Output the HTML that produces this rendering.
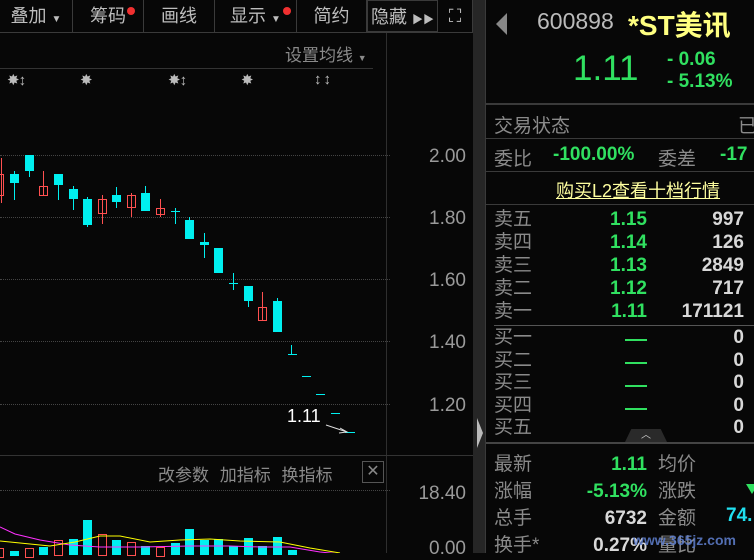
<!DOCTYPE html>
<html><head><meta charset="utf-8"><style>
*{margin:0;padding:0;box-sizing:border-box}
body{width:754px;height:553px;background:#070707;overflow:hidden;position:relative;font-family:"Liberation Sans","Noto Sans CJK SC",sans-serif;color:#9a9a9a}
.a{position:absolute}
.tb{position:absolute;top:0;height:32px;border-right:1px solid #3a3a3a;font-size:18px;color:#bdbdbd;text-align:center;line-height:32px}
.dot{position:absolute;width:8px;height:8px;border-radius:50%;background:#f03030}
.g{position:absolute;left:0;width:390px;height:0;border-top:1px dotted #444}
.c{position:absolute;background:#00f0f0}
.r{position:absolute;border:1px solid #ff5050}
.w{position:absolute;width:1px}
.cw{background:#00f0f0}.rw{background:#ff5050}
.ax{position:absolute;left:400px;width:66px;text-align:right;font-size:19px;color:#9a9a9a}
.lb{position:absolute;left:494px;font-size:19px;color:#8a8a8a}
.gn{color:#30e060;font-weight:bold}
.wh{color:#d8d8d8;font-weight:bold}
.hl{position:absolute;height:1px;background:#3a3a3a}
</style></head><body>
<div class="tb" style="left:0;width:73px">叠加 <span style="font-size:10px">▼</span></div>
<div class="tb" style="left:73px;width:71px">筹码</div><div class="dot" style="left:127px;top:7px"></div>
<div class="tb" style="left:144px;width:71px">画线</div>
<div class="tb" style="left:215px;width:82px">显示 <span style="font-size:10px">▼</span></div><div class="dot" style="left:283px;top:7px"></div>
<div class="tb" style="left:297px;width:70px">简约</div>
<div class="tb" style="left:367px;width:71px;border:1px solid #3a3a3a;background:#0a0a0a">隐藏 <span style="font-size:11px">▶▶</span></div>
<div class="tb" style="left:438px;width:35px;font-size:18px">⛶</div>
<div class="hl" style="left:0;top:32px;width:473px"></div>
<div class="a" style="left:386px;top:33px;width:1px;height:520px;background:#2e2e2e"></div>
<div class="a" style="left:473px;top:0;width:12px;height:553px;background:#262626"></div>
<div class="a" style="left:477px;top:418px;width:0;height:0;border-top:15px solid transparent;border-bottom:15px solid transparent;border-left:6px solid #bbb"></div>
<div class="a" style="left:285px;top:41px;font-size:17px;color:#8a8a8a">设置均线 <span style="font-size:9px">▼</span></div>
<div class="a" style="left:0;top:68px;width:373px;height:1px;background:#333"></div>
<div class="a" style="left:7px;top:71px;font-size:15px;color:#bbb;letter-spacing:-1px">✸↕</div>
<div class="a" style="left:80px;top:71px;font-size:15px;color:#bbb">✸</div>
<div class="a" style="left:168px;top:71px;font-size:15px;color:#bbb;letter-spacing:-1px">✸↕</div>
<div class="a" style="left:241px;top:71px;font-size:15px;color:#bbb">✸</div>
<div class="a" style="left:314px;top:71px;font-size:15px;color:#bbb;letter-spacing:2px">↕↕</div>
<div class="g" style="top:155px"></div><div class="g" style="top:217px"></div><div class="g" style="top:279px"></div><div class="g" style="top:341px"></div><div class="g" style="top:404px"></div>
<div class="ax" style="top:146px">2.00</div><div class="ax" style="top:208px">1.80</div><div class="ax" style="top:270px">1.60</div><div class="ax" style="top:332px">1.40</div><div class="ax" style="top:395px">1.20</div>
<div class="w rw" style="left:1px;top:158px;height:45px"></div><div class="r" style="left:-5px;top:174px;width:9px;height:22px"></div>
<div class="w cw" style="left:14px;top:171px;height:29px"></div><div class="c" style="left:10px;top:174px;width:9px;height:9px"></div>
<div class="w cw" style="left:29px;top:155px;height:22px"></div><div class="c" style="left:25px;top:155px;width:9px;height:16px"></div>
<div class="w rw" style="left:43px;top:171px;height:25px"></div><div class="r" style="left:39px;top:186px;width:9px;height:10px"></div>
<div class="w cw" style="left:58px;top:174px;height:26px"></div><div class="c" style="left:54px;top:174px;width:9px;height:11px"></div>
<div class="w cw" style="left:73px;top:186px;height:24px"></div><div class="c" style="left:69px;top:189px;width:9px;height:10px"></div>
<div class="w cw" style="left:87px;top:197px;height:30px"></div><div class="c" style="left:83px;top:199px;width:9px;height:26px"></div>
<div class="w rw" style="left:102px;top:195px;height:29px"></div><div class="r" style="left:98px;top:199px;width:9px;height:15px"></div>
<div class="w cw" style="left:116px;top:187px;height:21px"></div><div class="c" style="left:112px;top:195px;width:9px;height:7px"></div>
<div class="w rw" style="left:131px;top:193px;height:24px"></div><div class="r" style="left:127px;top:195px;width:9px;height:13px"></div>
<div class="w cw" style="left:145px;top:186px;height:25px"></div><div class="c" style="left:141px;top:193px;width:9px;height:18px"></div>
<div class="w rw" style="left:160px;top:199px;height:18px"></div><div class="r" style="left:156px;top:208px;width:9px;height:7px"></div>
<div class="w cw" style="left:175px;top:208px;height:16px"></div><div class="c" style="left:171px;top:211px;width:9px;height:1px"></div>
<div class="w cw" style="left:189px;top:217px;height:22px"></div><div class="c" style="left:185px;top:220px;width:9px;height:19px"></div>
<div class="w cw" style="left:204px;top:233px;height:25px"></div><div class="c" style="left:200px;top:242px;width:9px;height:3px"></div>
<div class="c" style="left:214px;top:248px;width:9px;height:25px"></div>
<div class="w cw" style="left:233px;top:273px;height:17px"></div><div class="c" style="left:229px;top:283px;width:9px;height:1px"></div>
<div class="w cw" style="left:248px;top:286px;height:21px"></div><div class="c" style="left:244px;top:286px;width:9px;height:15px"></div>
<div class="w rw" style="left:262px;top:292px;height:28px"></div><div class="r" style="left:258px;top:307px;width:9px;height:14px"></div>
<div class="w cw" style="left:277px;top:298px;height:34px"></div><div class="c" style="left:273px;top:301px;width:9px;height:31px"></div>
<div class="w cw" style="left:291px;top:345px;height:9px"></div><div class="c" style="left:288px;top:354px;width:9px;height:1px"></div>
<div class="c" style="left:302px;top:376px;width:9px;height:1px"></div>
<div class="c" style="left:316px;top:394px;width:9px;height:1px"></div>
<div class="c" style="left:331px;top:413px;width:9px;height:1px"></div>
<div class="c" style="left:345px;top:432px;width:10px;height:1px"></div>
<div class="a" style="left:287px;top:406px;font-size:18px;color:#fff">1.11</div>
<svg class="a" style="left:325px;top:420px" width="25" height="15"><path d="M1 5 L22 12 M15 8 L22 12 L14 13" stroke="#ddd" fill="none"/></svg>
<div class="a" style="left:0;top:455px;width:473px;height:1px;background:#333"></div>
<div class="a" style="left:158px;top:461px;font-size:17px;color:#8a8a8a;word-spacing:6px">改参数 加指标 换指标</div>
<div class="a" style="left:362px;top:461px;width:22px;height:22px;border:1px solid #555;color:#888;font-size:16px;text-align:center;line-height:20px">✕</div>
<div class="g" style="top:490px"></div>
<div class="ax" style="left:380px;top:483px;width:86px">18.40</div>
<div class="ax" style="top:538px">0.00</div>
<div class="r" style="left:-5px;top:548px;width:9px;height:10px"></div>
<div class="c" style="left:10px;top:551px;width:9px;height:5px"></div>
<div class="r" style="left:25px;top:548px;width:9px;height:10px"></div>
<div class="c" style="left:39px;top:547px;width:9px;height:8px"></div>
<div class="r" style="left:54px;top:540px;width:9px;height:16px"></div>
<div class="c" style="left:69px;top:539px;width:9px;height:16px"></div>
<div class="c" style="left:83px;top:520px;width:9px;height:35px"></div>
<div class="r" style="left:98px;top:534px;width:9px;height:22px"></div>
<div class="c" style="left:112px;top:540px;width:9px;height:15px"></div>
<div class="r" style="left:127px;top:542px;width:9px;height:14px"></div>
<div class="c" style="left:141px;top:546px;width:9px;height:9px"></div>
<div class="r" style="left:156px;top:547px;width:9px;height:10px"></div>
<div class="c" style="left:171px;top:543px;width:9px;height:12px"></div>
<div class="c" style="left:185px;top:529px;width:9px;height:26px"></div>
<div class="c" style="left:200px;top:540px;width:9px;height:15px"></div>
<div class="c" style="left:214px;top:539px;width:9px;height:16px"></div>
<div class="c" style="left:229px;top:546px;width:9px;height:9px"></div>
<div class="c" style="left:244px;top:538px;width:9px;height:17px"></div>
<div class="c" style="left:258px;top:546px;width:9px;height:9px"></div>
<div class="c" style="left:273px;top:537px;width:9px;height:18px"></div>
<div class="c" style="left:288px;top:550px;width:9px;height:5px"></div>
<svg class="a" style="left:0;top:520px" width="386" height="33"><polyline points="0,7 15,14 40,20 70,25 100,27 140,27 190,26 230,26 260,27 290,27 320,32 350,35" stroke="#ff30ff" fill="none"/><polyline points="0,21 30,24 50,26 75,22 100,16 120,16 150,22 180,20 210,19 240,21 280,22 310,28 340,33" stroke="#ffff00" fill="none"/></svg>
<div class="a" style="left:485px;top:0;width:1px;height:553px;background:#3a3a3a"></div>
<div class="a" style="left:496px;top:13px;width:0;height:0;border-top:11px solid transparent;border-bottom:11px solid transparent;border-right:11px solid #888"></div>
<div class="a" style="left:537px;top:8px;font-size:23px;color:#bbb">600898</div>
<div class="a" style="left:628px;top:4px;font-size:28px;color:#ffff80;font-weight:bold;white-space:nowrap">*ST美讯</div>
<div class="a" style="left:573px;top:49px;font-size:35px;color:#30e060">1.11</div>
<div class="a gn" style="left:667px;top:49px;font-size:19px">- 0.06</div>
<div class="a gn" style="left:667px;top:71px;font-size:19px">- 5.13%</div>
<div class="hl" style="left:486px;top:103px;width:268px;height:2px"></div>
<div class="lb" style="top:111px">交易状态</div><div class="lb" style="left:738px;top:111px">已</div>
<div class="hl" style="left:486px;top:138px;width:268px"></div>
<div class="lb" style="top:144px">委比</div><div class="a gn" style="left:553px;top:144px;font-size:19px">-100.00%</div>
<div class="lb" style="left:658px;top:144px">委差</div><div class="a gn" style="left:720px;top:144px;font-size:19px">-17</div>
<div class="hl" style="left:486px;top:171px;width:268px"></div>
<div class="a" style="left:556px;top:177px;font-size:18px;color:#ffffa0;text-decoration:underline">购买L2查看十档行情</div>
<div class="hl" style="left:486px;top:204px;width:268px"></div>
<div class="lb" style="top:208px;line-height:23px">卖五<br>卖四<br>卖三<br>卖二<br>卖一</div>
<div class="a gn" style="left:560px;top:208px;width:87px;text-align:right;font-size:19px;line-height:23px">1.15<br>1.14<br>1.13<br>1.12<br>1.11</div>
<div class="a wh" style="left:650px;top:208px;width:94px;text-align:right;font-size:19px;line-height:23px">997<br>126<br>2849<br>717<br>171121</div>
<div class="hl" style="left:494px;top:325px;width:260px;background:#555"></div>
<div class="lb" style="top:327px;line-height:22.6px">买一<br>买二<br>买三<br>买四<br>买五</div>
<div class="a" style="left:625px;top:339px;width:22px;height:2px;background:#30e060;box-shadow:0 23px 0 #30e060,0 46px 0 #30e060,0 69px 0 #30e060"></div>
<div class="a wh" style="left:650px;top:327px;width:94px;text-align:right;font-size:19px;line-height:22.6px">0<br>0<br>0<br>0<br>0</div>
<div class="a" style="left:625px;top:429px;width:42px;height:13px;background:#2a2a2a;clip-path:polygon(15% 0,85% 0,100% 100%,0 100%);color:#ccc;font-size:10px;text-align:center;line-height:13px">︿</div>
<div class="hl" style="left:486px;top:442px;width:268px;height:2px;background:#444"></div>
<div class="lb" style="top:451px;line-height:27px">最新<br>涨幅<br>总手<br>换手*</div>
<div class="a gn" style="left:560px;top:451px;width:87px;text-align:right;font-size:19px;line-height:27px">1.11<br>-5.13%</div>
<div class="a wh" style="left:560px;top:505px;width:87px;text-align:right;font-size:19px;line-height:27px">6732<br>0.27%</div>
<div class="lb" style="left:658px;top:451px;line-height:27px">均价<br>涨跌<br>金额<br>量比</div>
<div class="a" style="left:746px;top:484px;width:0;height:0;border-left:6px solid transparent;border-right:6px solid transparent;border-top:10px solid #30e060"></div>
<div class="a" style="left:726px;top:505px;font-size:19px;font-weight:bold;color:#20e0f0">74.</div>
<div class="a" style="left:633px;top:532px;font-size:14px;font-weight:bold;color:#6080d0;opacity:.85">www.365jz.com</div>
</body></html>
